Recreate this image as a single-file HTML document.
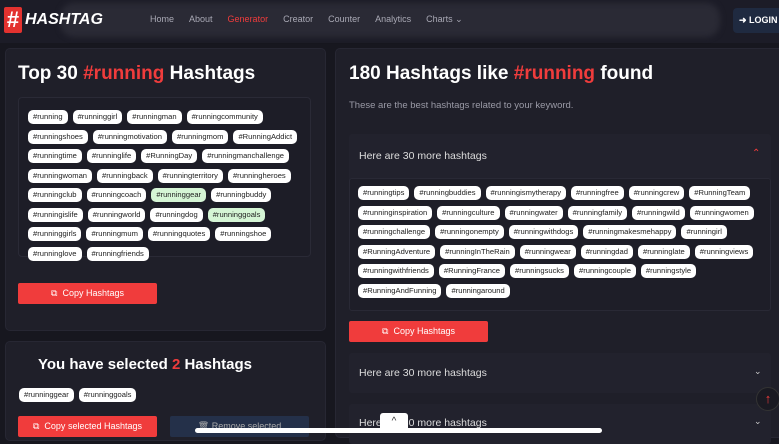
<!DOCTYPE html>
<html><head><meta charset="utf-8"><style>
*{box-sizing:border-box;margin:0;padding:0}
body{width:779px;height:430px;overflow:hidden;background:#17171f;font-family:"Liberation Sans",sans-serif;position:relative;color:#fff}
.abs{position:absolute}
.nav{left:0;top:0;width:779px;height:43px;background:#1c1c27}
.navblur{left:60px;top:3px;width:660px;height:34px;background:#2a2a35;border-radius:14px;filter:blur(3px)}
.links{left:150px;top:14px;font-size:9px;color:#a9a9b5;display:flex;gap:15px}
.card{background:#1f1f29;border:1px solid #272733;border-radius:5px}
.tags{display:flex;flex-wrap:wrap;gap:5.5px 5px}
.t{background:#fff;color:#222;font-size:7.6px;height:14px;line-height:14px;padding:0 5px;border-radius:5px;white-space:nowrap}
.g{background:#d5f5d5}
.btn{background:#f03c3c;color:#fff;font-size:9px;border-radius:2px;display:flex;align-items:center;justify-content:center}
h2{font-size:19px;font-weight:bold}
.r{color:#f03c3c}
.acc{background:#22222d;border-radius:3px;font-size:10.5px;color:#ddd}
</style></head><body>
<div class="abs nav"></div>
<div class="abs navblur"></div>
<div class="abs" style="left:4px;top:7px;width:18px;height:26px;background:#e3322f;border-radius:2px;color:#fff;font-weight:bold;font-size:22px;line-height:26px;text-align:center">#</div>
<div class="abs" style="left:25px;top:11px;font-size:16px;font-weight:bold;font-style:italic">HASHTAG</div>
<div class="abs links"><span>Home</span><span>About</span><span style="color:#f03c3c">Generator</span><span>Creator</span><span>Counter</span><span>Analytics</span><span>Charts ⌄</span></div>
<div class="abs" style="left:733px;top:8px;width:50px;height:25px;background:#1f2a40;border-radius:4px;font-size:9px;font-weight:bold;line-height:25px;padding-left:6px">➜ LOGIN</div>

<div class="abs card" style="left:5px;top:48px;width:321px;height:283px"></div>
<div class="abs" style="left:18px;top:63px"><h2>Top 30 <span class="r">#running</span> Hashtags</h2></div>
<div class="abs" style="left:18px;top:97px;width:293px;height:160px;border:1px solid #2a2a36;border-radius:4px;background:#1d1d27"></div>
<div class="abs tags" style="left:28px;top:110px;width:278px">
<span class="t">#running</span><span class="t">#runninggirl</span><span class="t">#runningman</span><span class="t">#runningcommunity</span><span class="t">#runningshoes</span><span class="t">#runningmotivation</span><span class="t">#runningmom</span><span class="t">#RunningAddict</span><span class="t">#runningtime</span><span class="t">#runninglife</span><span class="t">#RunningDay</span><span class="t">#runningmanchallenge</span><span class="t">#runningwoman</span><span class="t">#runningback</span><span class="t">#runningterritory</span><span class="t">#runningheroes</span><span class="t">#runningclub</span><span class="t">#runningcoach</span><span class="t g">#runninggear</span><span class="t">#runningbuddy</span><span class="t">#runningislife</span><span class="t">#runningworld</span><span class="t">#runningdog</span><span class="t g">#runninggoals</span><span class="t">#runninggirls</span><span class="t">#runningmum</span><span class="t">#runningquotes</span><span class="t">#runningshoe</span><span class="t">#runninglove</span><span class="t">#runningfriends</span>
</div>
<div class="abs btn" style="left:18px;top:283px;width:139px;height:21px">⧉&nbsp; Copy Hashtags</div>

<div class="abs card" style="left:5px;top:341px;width:321px;height:100px"></div>
<div class="abs" style="left:38px;top:356px;font-size:15px;font-weight:bold">You have selected <span class="r">2</span> Hashtags</div>
<div class="abs tags" style="left:19px;top:388px"><span class="t">#runninggear</span><span class="t">#runninggoals</span></div>
<div class="abs btn" style="left:18px;top:416px;width:139px;height:21px">⧉&nbsp; Copy selected Hashtags</div>
<div class="abs" style="left:170px;top:416px;width:139px;height:21px;background:#243049;border-radius:2px;font-size:9px;color:#aaa;text-align:center;line-height:21px">🗑 Remove selected</div>

<div class="abs card" style="left:335px;top:48px;width:450px;height:390px"></div>
<div class="abs" style="left:349px;top:63px"><h2>180 Hashtags like <span class="r">#running</span> found</h2></div>
<div class="abs" style="left:349px;top:100px;font-size:9.5px;color:#9a9aa6">These are the best hashtags related to your keyword.</div>
<div class="abs acc" style="left:349px;top:134px;width:422px;height:177px"></div>
<div class="abs" style="left:359px;top:150px;font-size:10.5px;color:#ddd">Here are 30 more hashtags</div>
<div class="abs r" style="left:752px;top:148px;font-size:10px">⌃</div>
<div class="abs" style="left:349px;top:178px;width:422px;height:133px;border:1px solid #292935;border-radius:3px;background:#1e1e28"></div>
<div class="abs tags" style="left:358px;top:186px;width:405px">
<span class="t">#runningtips</span><span class="t">#runningbuddies</span><span class="t">#runningismytherapy</span><span class="t">#runningfree</span><span class="t">#runningcrew</span><span class="t">#RunningTeam</span><span class="t">#runninginspiration</span><span class="t">#runningculture</span><span class="t">#runningwater</span><span class="t">#runningfamily</span><span class="t">#runningwild</span><span class="t">#runningwomen</span><span class="t">#runningchallenge</span><span class="t">#runningonempty</span><span class="t">#runningwithdogs</span><span class="t">#runningmakesmehappy</span><span class="t">#runningirl</span><span class="t">#RunningAdventure</span><span class="t">#runningInTheRain</span><span class="t">#runningwear</span><span class="t">#runningdad</span><span class="t">#runninglate</span><span class="t">#runningviews</span><span class="t">#runningwithfriends</span><span class="t">#RunningFrance</span><span class="t">#runningsucks</span><span class="t">#runningcouple</span><span class="t">#runningstyle</span><span class="t">#RunningAndFunning</span><span class="t">#runningaround</span>
</div>
<div class="abs btn" style="left:349px;top:321px;width:139px;height:21px">⧉&nbsp; Copy Hashtags</div>
<div class="abs acc" style="left:349px;top:353px;width:422px;height:40px"></div>
<div class="abs" style="left:359px;top:367px;font-size:10.5px;color:#ddd">Here are 30 more hashtags</div>
<div class="abs" style="left:754px;top:366px;font-size:9px;color:#ccc">⌄</div>
<div class="abs acc" style="left:349px;top:404px;width:422px;height:40px"></div>
<div class="abs" style="left:359px;top:417px;font-size:10.5px;color:#ddd">Here are 30 more hashtags</div>
<div class="abs" style="left:754px;top:416px;font-size:9px;color:#ccc">⌄</div>
<div class="abs" style="left:195px;top:428px;width:407px;height:5px;background:#fff;border-radius:3px"></div>
<div class="abs" style="left:380px;top:413px;width:28px;height:20px;background:#fff;border-radius:3px;color:#333;font-size:10px;text-align:center;line-height:18px">^</div>
<div class="abs" style="left:756px;top:387px;width:24px;height:24px;border-radius:50%;background:#1a1a22;border:1px solid #333;color:#f03c3c;font-size:13px;text-align:center;line-height:22px">↑</div>
</body></html>
